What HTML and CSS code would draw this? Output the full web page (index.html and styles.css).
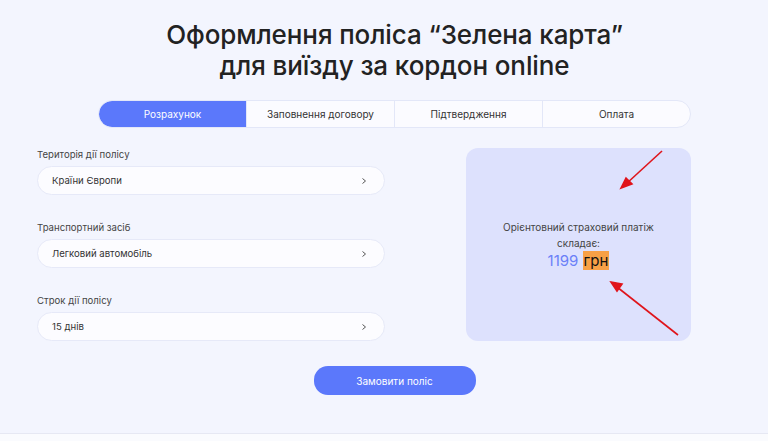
FILE: index.html
```html
<!DOCTYPE html>
<html lang="uk">

<head>
    <meta charset="UTF-8">
    <meta name="viewport" content="width=device-width, initial-scale=1.0">
    <title>Зелена карта</title>
    <link rel="stylesheet" href="styles.css">
</head>

<body>
    <div class="page">
        <div class="wrap">
            <div class="head">
                <h1 class="title">Оформлення поліса “Зелена карта”<br>для виїзду за кордон online</h1>
                <div class="tabs">
                    <a href="javascript:;" class="tab active">Розрахунок</a>
                    <a href="javascript:;" class="tab">Заповнення договору</a>
                    <a href="javascript:;" class="tab">Підтвердження</a>
                    <a href="javascript:;" class="tab">Оплата</a>
                </div>
            </div>

            <div class="calc">
                <div class="fields">
                    <div class="field">
                        <div class="label">Територія дії полісу</div>
                        <div class="select">
                            <span>Країни Європи</span>
                            <svg class="chev" width="6" height="8" viewBox="0 0 6 8"><path d="M1.5 1.5 L4.5 4 L1.5 6.5" fill="none" stroke="#555" stroke-width="1"/></svg>
                        </div>
                    </div>
                    <div class="field">
                        <div class="label">Транспортний засіб</div>
                        <div class="select">
                            <span>Легковий автомобіль</span>
                            <svg class="chev" width="6" height="8" viewBox="0 0 6 8"><path d="M1.5 1.5 L4.5 4 L1.5 6.5" fill="none" stroke="#555" stroke-width="1"/></svg>
                        </div>
                    </div>
                    <div class="field">
                        <div class="label">Строк дії полісу</div>
                        <div class="select">
                            <span>15 днів</span>
                            <svg class="chev" width="6" height="8" viewBox="0 0 6 8"><path d="M1.5 1.5 L4.5 4 L1.5 6.5" fill="none" stroke="#555" stroke-width="1"/></svg>
                        </div>
                    </div>
                </div>

                <div class="result">
                    <p class="result_text">Орієнтовний страховий платіж<br>складає:</p>
                    <p class="price"><span class="sum">1199</span> <span class="cur">грн</span></p>
                    <!-- стрілки -->
                    <svg class="arrows" width="225" height="193" viewBox="0 0 225 193">
                        <g stroke="#e0141b" stroke-width="1.6" fill="#e0141b">
                            <line x1="196" y1="3" x2="160" y2="36"/>
                            <polygon points="155,40 160,30 166,36"/>
                            <line x1="212" y1="187" x2="151" y2="139"/>
                            <polygon points="145,134 156,136 151,143"/>
                        </g>
                    </svg>
                </div>
            </div>

            <div class="order">
                <a href="javascript:;" class="btn">Замовити поліс</a>
            </div>
        </div>
    </div>
    <div class="foot"></div>
</body>

</html>
```

FILE: styles.css
```css
* {
    margin: 0;
    padding: 0;
    box-sizing: border-box;
}

body {
    font-family: Inter, "Noto Sans", sans-serif;
    background: #f3f5fe;
    color: #333;
}

body a {
    text-decoration: none;
    color: #333;
}

.page {
    height: 433px;
    padding-top: 19px;
}

.wrap {
    width: 654px;
    margin-left: 37px;
}

.head {
    width: 593px;
    margin-left: 61px;
}

.title {
    font-size: 26px;
    line-height: 31px;
    font-weight: 500;
    text-align: center;
    color: #222;
    letter-spacing: -0.1px;
}

.tabs {
    margin-top: 19px;
    height: 28px;
    display: flex;
    background: #fbfbff;
    border: 1px solid #e3e7f8;
    border-radius: 14px;
    overflow: hidden;
}

.tab {
    flex: 1;
    display: flex;
    align-items: center;
    justify-content: center;
    font-size: 10px;
    border-left: 1px solid #e3e7f8;
}

.tab:first-child {
    border-left: none;
}

.tab.active {
    background: #5b78fb;
    color: #fff;
    border-radius: 14px 0 0 14px;
}

.calc {
    margin-top: 20px;
    display: flex;
    justify-content: space-between;
}

.fields {
    width: 348px;
    display: flex;
    flex-direction: column;
    gap: 26px;
}

.label {
    font-size: 9.6px;
    line-height: 14px;
    color: #444;
    margin-bottom: 4px;
}

.select {
    height: 29px;
    background: #fcfcff;
    border: 1px solid #e6e9f8;
    border-radius: 15px;
    display: flex;
    align-items: center;
    justify-content: space-between;
    padding: 0 17px 0 14px;
    font-size: 9.6px;
    color: #333;
}

.result {
    width: 225px;
    height: 193px;
    background: #dde1fd;
    border-radius: 12px;
    position: relative;
    display: flex;
    flex-direction: column;
    align-items: center;
    justify-content: center;
    text-align: center;
}

.result_text {
    font-size: 10px;
    line-height: 16px;
    color: #444;
}

.price {
    font-size: 15px;
    line-height: 19px;
}

.sum {
    color: #6a7ff8;
}

.cur {
    color: #111;
    background: #f7a046;
    padding: 0 1px;
}

.arrows {
    position: absolute;
    left: 0;
    top: 0;
}

.order {
    margin-top: 25px;
    display: flex;
    justify-content: center;
    margin-left: 61px;
    width: 593px;
}

.btn {
    width: 162px;
    height: 29px;
    border-radius: 14px;
    background: #5b78fb;
    color: #fff;
    font-size: 10px;
    display: flex;
    align-items: center;
    justify-content: center;
}

body a.btn {
    color: #fff;
}

body a.active {
    color: #fff;
}

.foot {
    height: 8px;
    background: #fafbfe;
    border-top: 1px solid #e6e8f3;
}
```
